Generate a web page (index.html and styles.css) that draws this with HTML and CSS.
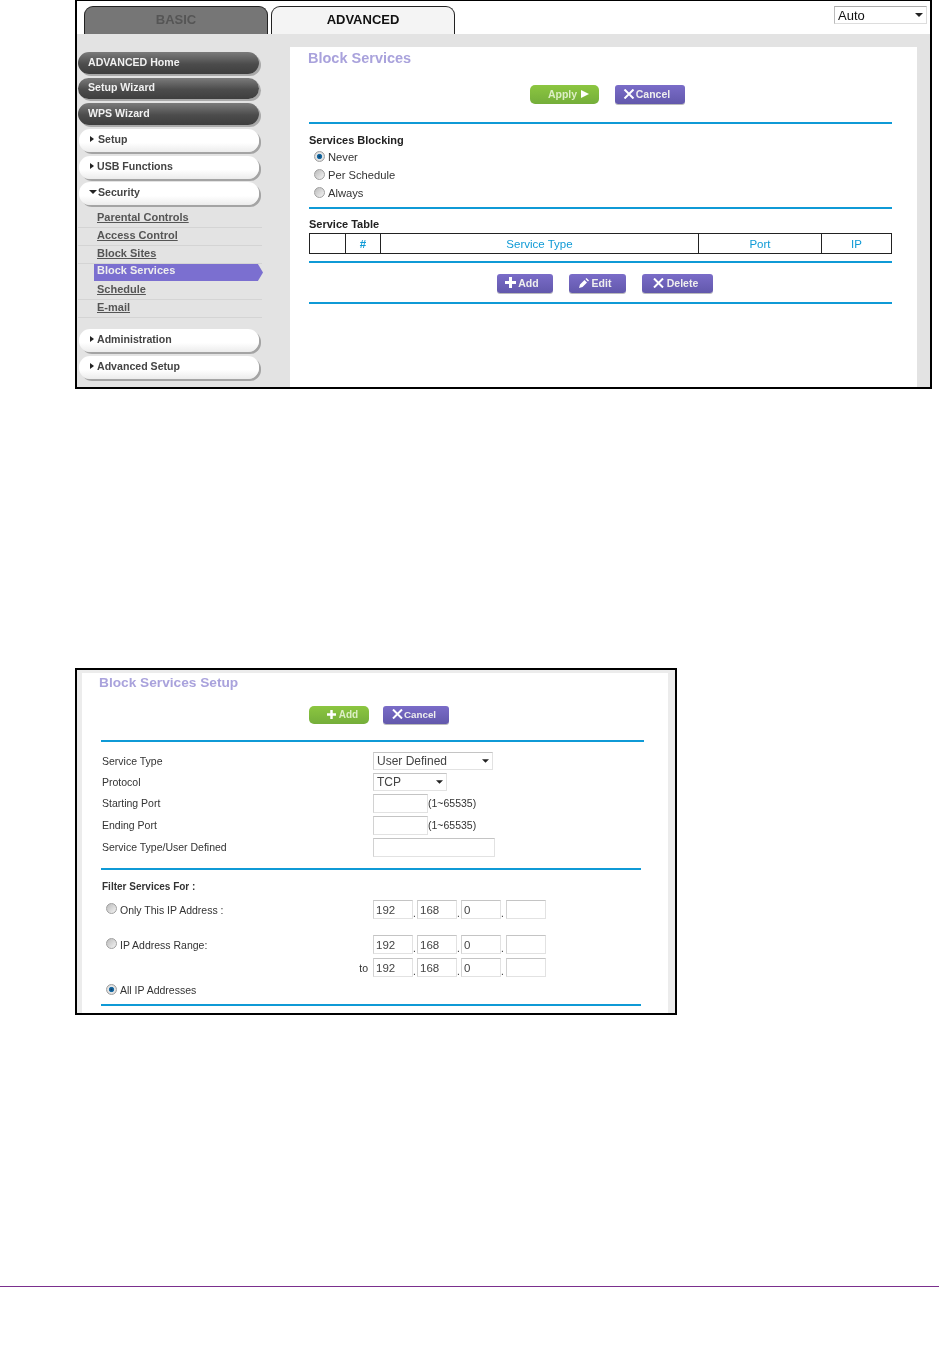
FILE: index.html
```html
<!DOCTYPE html>
<html lang="en">

<head>
    <meta charset="UTF-8">
    <meta name="viewport" content="width=device-width, initial-scale=1.0">
    <title>Block Services</title>
    <link rel="stylesheet" href="styles.css">
</head>

<body>

    <div class="shot shot-main">
        <div class="topbar">
            <div class="tab tab-basic">BASIC</div>
            <div class="tab tab-advanced">ADVANCED</div>
            <div class="lang">
                <span>Auto</span>
                <svg class="arrow" width="8" height="4" viewBox="0 0 8 4"><path d="M0 0H8L4 4Z" /></svg>
            </div>
        </div>

        <div class="main-body">
            <div class="sidebar">
                <a class="nav nav-dark nav-a">ADVANCED Home</a>
                <a class="nav nav-dark nav-b">Setup Wizard</a>
                <a class="nav nav-dark nav-c">WPS Wizard</a>
                <a class="nav nav-light nav-d"><i class="tri-right tri-wide"></i>Setup</a>
                <a class="nav nav-light nav-d"><i class="tri-right"></i>USB Functions</a>
                <a class="nav nav-light nav-e"><i class="tri-down"></i>Security</a>

                <div class="subnav">
                    <a class="sub">Parental Controls</a>
                    <a class="sub">Access Control</a>
                    <a class="sub">Block Sites</a>
                    <a class="sub sub-active">Block Services</a>
                    <a class="sub">Schedule</a>
                    <a class="sub">E-mail</a>
                </div>

                <a class="nav nav-light nav-f"><i class="tri-right"></i>Administration</a>
                <a class="nav nav-light nav-d"><i class="tri-right"></i>Advanced Setup</a>
            </div>

            <div class="panel">
                <h2 class="title">Block Services</h2>

                <div class="btn-row btn-row-top">
                    <button class="btn btn-green btn-apply">Apply
                        <svg width="8" height="8" viewBox="0 0 8 8"><path d="M0 0L8 4L0 8Z" /></svg>
                    </button>
                    <button class="btn btn-purple btn-cancel">
                        <svg class="x-icon" width="12" height="10" viewBox="0 0 12 10"><path d="M1.5 0.5L10.5 9.5M10.5 0.5L1.5 9.5" /></svg>Cancel
                    </button>
                </div>

                <div class="rule"></div>

                <h3 class="sec-title sec-blocking">Services Blocking</h3>
                <div class="radio-row radio-first"><span class="radio radio-on"></span>Never</div>
                <div class="radio-row"><span class="radio"></span>Per Schedule</div>
                <div class="radio-row"><span class="radio"></span>Always</div>

                <div class="rule rule-b"></div>

                <h3 class="sec-title sec-table">Service Table</h3>
                <table class="svc-table">
                    <tr>
                        <th class="col-1"></th>
                        <th class="col-2">#</th>
                        <th class="col-3">Service Type</th>
                        <th class="col-4">Port</th>
                        <th>IP</th>
                    </tr>
                </table>

                <div class="rule rule-c"></div>

                <div class="btn-row btn-row-bottom">
                    <button class="btn btn-purple btn-add">
                        <svg width="11" height="11" viewBox="0 0 11 11"><path d="M4 0H7V4H11V7H7V11H4V7H0V4H4Z" /></svg>Add
                    </button>
                    <button class="btn btn-purple btn-edit">
                        <svg width="10" height="10" viewBox="0 0 10 10"><path d="M0 10L1 6.5L5.5 2L8 4.5L3.5 9ZM6.5 1L7.5 0L10 2.5L9 3.5Z" /></svg>Edit
                    </button>
                    <button class="btn btn-purple btn-delete">
                        <svg class="x-icon" width="11" height="10" viewBox="0 0 11 10"><path d="M1 0.5L10 9.5M10 0.5L1 9.5" /></svg>Delete
                    </button>
                </div>

                <div class="rule rule-d"></div>
            </div>
        </div>
    </div>

    <div class="shot shot-setup">
        <div class="setup-panel">
            <h2 class="title setup-title">Block Services Setup</h2>

            <div class="btn-row setup-btns">
                <button class="btn btn-green btn-setup-add">
                    <svg width="9" height="9" viewBox="0 0 11 11"><path d="M4 0H7V4H11V7H7V11H4V7H0V4H4Z" /></svg>Add
                </button>
                <button class="btn btn-purple btn-setup-cancel">
                    <svg class="x-icon" width="11" height="10" viewBox="0 0 11 10"><path d="M1 0.5L10 9.5M10 0.5L1 9.5" /></svg>Cancel
                </button>
            </div>

            <div class="rule setup-rule-a"></div>

            <div class="form-row row-a">
                <label>Service Type</label>
                <div class="box sel-type"><span>User Defined</span><svg class="arrow" width="7" height="4" viewBox="0 0 8 4"><path d="M0 0H8L4 4Z" /></svg></div>
            </div>
            <div class="form-row row-b">
                <label>Protocol</label>
                <div class="box sel-proto"><span>TCP</span><svg class="arrow" width="7" height="4" viewBox="0 0 8 4"><path d="M0 0H8L4 4Z" /></svg></div>
            </div>
            <div class="form-row row-c">
                <label>Starting Port</label>
                <div class="box port"></div><span class="hint">(1~65535)</span>
            </div>
            <div class="form-row row-c">
                <label>Ending Port</label>
                <div class="box port"></div><span class="hint">(1~65535)</span>
            </div>
            <div class="form-row row-c">
                <label>Service Type/User Defined</label>
                <div class="box user-def"></div>
            </div>

            <div class="rule setup-rule-b"></div>

            <h3 class="filter-title">Filter Services For :</h3>

            <div class="form-row ip-row ip-first">
                <label class="radio-label"><span class="radio"></span>Only This IP Address :</label>
                <div class="ip-group">
                    <div class="box ip">192</div><i>.</i><div class="box ip">168</div><i>.</i><div class="box ip">0</div><i>.</i><div class="box ip"></div>
                </div>
            </div>
            <div class="form-row ip-row ip-second">
                <label class="radio-label"><span class="radio"></span>IP Address Range:</label>
                <div class="ip-group">
                    <div class="box ip">192</div><i>.</i><div class="box ip">168</div><i>.</i><div class="box ip">0</div><i>.</i><div class="box ip"></div>
                </div>
            </div>
            <div class="form-row ip-row ip-third">
                <label class="to-label">to</label>
                <div class="ip-group">
                    <div class="box ip">192</div><i>.</i><div class="box ip">168</div><i>.</i><div class="box ip">0</div><i>.</i><div class="box ip"></div>
                </div>
            </div>
            <div class="form-row all-row">
                <label class="radio-label"><span class="radio radio-on"></span>All IP Addresses</label>
            </div>

            <div class="rule setup-rule-c"></div>
        </div>
    </div>

    <div class="footer-line"></div>

</body>

</html>
```

FILE: styles.css
```css
* {
    margin: 0;
    padding: 0;
    box-sizing: border-box;
}

body {
    font-family: 'Liberation Sans', Arial, sans-serif;
    background: #fff;
    color: #333;
    overflow: hidden;
}

.shot {
    border: 2px solid #000;
    margin-left: 75px;
}

.shot-main {
    width: 857px;
    height: 389px;
    border-top-width: 1px;
    background: #e3e3e3;
    filter: blur(0.3px);
}

/* top tabs */
.topbar {
    height: 33px;
    background: #fff;
    display: flex;
    align-items: flex-end;
    position: relative;
}

.tab {
    height: 28px;
    border: 1px solid #222;
    border-bottom: none;
    border-radius: 9px 9px 0 0;
    display: flex;
    justify-content: center;
    align-items: center;
    padding-bottom: 3px;
    font-size: 13px;
    font-weight: bold;
}

.tab-basic {
    width: 184px;
    margin-left: 7px;
    background: #767676;
    color: #555;
}

.tab-advanced {
    width: 184px;
    margin-left: 3px;
    background: #f4f4f4;
    color: #111;
}

.lang {
    position: absolute;
    top: 5px;
    left: 757px;
    width: 93px;
    height: 18px;
    border: 1px solid #ddd;
    border-top-color: #aaa;
    border-left-color: #bbb;
    background: #fff;
    display: flex;
    justify-content: space-between;
    align-items: center;
    padding: 0 3px;
    font-size: 13px;
    color: #111;
}

.arrow {
    fill: #222;
}

.main-body {
    display: flex;
    height: 355px;
}

/* sidebar */
.sidebar {
    width: 213px;
    flex-shrink: 0;
    padding-left: 1px;
}

.nav {
    display: flex;
    align-items: center;
    width: 181px;
    border-radius: 11px;
    padding-bottom: 3px;
    font-size: 10.6px;
    font-weight: bold;
}

.nav-dark {
    background: linear-gradient(to bottom, #7b7b7b, #4c4c4c 55%, #3e3e3e);
    color: #f1f1f1;
    padding-left: 10px;
    box-shadow: 2px 2px 0 #a9a9a9;
    height: 22px;
}

.nav-a {
    margin-top: 18px;
}

.nav-b {
    margin-top: 4px;
    height: 21px;
}

.nav-c {
    margin-top: 4px;
}

.nav-light {
    background: linear-gradient(to bottom, #fff 60%, #ececec);
    color: #444;
    margin-left: 1px;
    width: 180px;
    padding-left: 11px;
    box-shadow: 2px 2px 0 #a4a4a4;
    height: 23px;
}

.nav-d {
    margin-top: 4px;
}

.nav-e {
    margin-top: 3px;
}

.nav-f {
    margin-top: 11px;
}

.tri-right {
    width: 0;
    height: 0;
    border-left: 4px solid #222;
    border-top: 3px solid transparent;
    border-bottom: 3px solid transparent;
    margin-right: 3px;
}

.tri-wide {
    margin-right: 4px;
}

.tri-down {
    width: 0;
    height: 0;
    border-top: 4px solid #222;
    border-left: 4px solid transparent;
    border-right: 4px solid transparent;
    margin-right: 1px;
    margin-left: -1px;
}

.subnav {
    margin-top: 5px;
    width: 184px;
}

.sub {
    display: block;
    height: 18px;
    line-height: 15px;
    padding-left: 19px;
    font-size: 11px;
    font-weight: bold;
    color: #555;
    text-decoration: underline;
    border-bottom: 1px solid #d4d4d4;
}

.sub-active {
    width: 169px;
    margin-left: 16px;
    padding-left: 3px;
    height: 17px;
    line-height: 13px;
    margin-bottom: 1px;
    background: #7b6fd0;
    color: #eee;
    text-decoration: none;
    border-bottom: none;
    clip-path: polygon(0 0, 97% 0, 100% 50%, 97% 100%, 0 100%);
}

/* content panel */
.panel {
    width: 627px;
    height: 340px;
    margin-top: 13px;
    background: #fff;
    padding-left: 19px;
}

.title {
    font-size: 14.5px;
    font-weight: bold;
    color: #a9a2dc;
    line-height: 16px;
    margin-top: 3px;
    margin-left: -1px;
}

.btn-row {
    display: flex;
}

.btn-row-top {
    margin-top: 19px;
    margin-left: 221px;
    gap: 16px;
}

.btn {
    height: 19px;
    border: none;
    border-radius: 3px;
    font-family: inherit;
    font-size: 10.5px;
    font-weight: bold;
    color: #eee;
    display: flex;
    justify-content: center;
    align-items: center;
    gap: 3px;
    padding-bottom: 2px;
    fill: #fff;
}

.x-icon {
    fill: none;
    stroke: #fff;
    stroke-width: 2;
}

.btn-green {
    background: linear-gradient(to bottom, #8cc640, #74ae3a);
    border-radius: 5px;
    color: #dcefc4;
}

.btn-purple {
    background: linear-gradient(to bottom, #7a6cc8, #6258ac);
    box-shadow: 0 1px 0 #bbb;
}

.btn-apply {
    width: 69px;
    padding-left: 8px;
    gap: 4px;
}

.btn-cancel {
    width: 70px;
    gap: 1px;
    padding-right: 7px;
}

.rule {
    height: 2px;
    background: #0f9ad6;
    width: 583px;
    margin-top: 18px;
}

.sec-title {
    font-size: 11px;
    font-weight: bold;
    color: #222;
}

.sec-blocking {
    margin-top: 9px;
    line-height: 14px;
}

.radio-row {
    display: flex;
    align-items: center;
    height: 18px;
    font-size: 11.2px;
    color: #333;
    padding-left: 5px;
    gap: 3px;
}

.radio-first {
    margin-top: 1px;
}

.radio {
    display: inline-block;
    width: 11px;
    height: 11px;
    margin-top: -2px;
    border-radius: 50%;
    border: 1px solid #a0a0a0;
    background: linear-gradient(135deg, #bbb, #f4f4f4);
    flex-shrink: 0;
}

.radio-on {
    background: radial-gradient(circle, #0e3f6a 0, #1a6fa8 35%, #e8e8e8 48%, #c9c9c9);
}

.rule-b {
    margin-top: 5px;
}

.sec-table {
    margin-top: 8px;
    line-height: 14px;
}

.svc-table {
    margin-top: 2px;
    width: 583px;
    height: 21px;
    border-collapse: collapse;
    table-layout: fixed;
}

.svc-table th {
    border: 1px solid #222;
    font-size: 11.5px;
    font-weight: normal;
    color: #0f9ad6;
}

.col-1 {
    width: 36px;
}

.col-2 {
    width: 35px;
    font-weight: bold !important;
}

.col-3 {
    width: 318px;
}

.col-4 {
    width: 123px;
}

.rule-c {
    margin-top: 7px;
}

.btn-row-bottom {
    margin-top: 11px;
    margin-left: 188px;
    gap: 16px;
}

.btn-add {
    width: 56px;
    gap: 2px;
    padding-right: 6px;
}

.btn-edit {
    width: 57px;
    padding-right: 5px;
}

.btn-delete {
    width: 71px;
    padding-right: 4px;
}

.rule-d {
    margin-top: 9px;
}

/* second screenshot */
.shot-setup {
    width: 602px;
    height: 347px;
    margin-top: 279px;
    background: #ececec;
    padding: 3px 7px 0 5px;
    filter: blur(0.5px);
}

.setup-panel {
    height: 340px;
    background: #fff;
    padding-left: 16px;
}

.setup-title {
    margin-top: 0;
    margin-left: 1px;
    padding-top: 2px;
    height: 18px;
    font-size: 13.7px;
}

.setup-btns {
    margin-top: 15px;
    margin-left: 211px;
    gap: 14px;
}

.btn-setup-add {
    width: 60px;
    height: 18px;
    font-size: 10px;
    padding-left: 7px;
}

.btn-setup-cancel {
    width: 66px;
    height: 18px;
    font-size: 9.8px;
    gap: 1px;
    padding-right: 4px;
}

.setup-rule-a {
    margin-top: 16px;
    margin-left: 3px;
    width: 543px;
}

.form-row {
    display: flex;
    align-items: center;
    font-size: 10.5px;
    color: #333;
}

.form-row label {
    width: 271px;
    margin-left: 4px;
    flex-shrink: 0;
}

.box {
    height: 19px;
    border: 1px solid #e2e2e2;
    border-top-color: #c4c4c4;
    border-left-color: #d2d2d2;
    background: #fff;
    font-size: 12px;
    color: #444;
    display: flex;
    align-items: center;
    padding-left: 3px;
}

.box .arrow {
    margin-left: auto;
    margin-right: 3px;
}

.row-a {
    height: 20px;
    margin-top: 9px;
}

.row-b {
    height: 21px;
}

.row-c {
    height: 22px;
}

.sel-type {
    width: 120px;
    height: 18px;
}

.sel-proto {
    width: 74px;
    height: 18px;
}

.port {
    width: 55px;
}

.hint {
    font-size: 10.5px;
}

.user-def {
    width: 122px;
}

.setup-rule-b {
    margin-top: 10px;
    margin-left: 3px;
    width: 540px;
}

.filter-title {
    font-size: 10px;
    font-weight: bold;
    color: #333;
    margin: 10px 0 0 4px;
    line-height: 14px;
}

.radio-label {
    display: flex;
    align-items: center;
    gap: 3px;
    padding-left: 4px;
}

.to-label {
    text-align: right;
    padding-right: 5px;
}

.ip-group {
    display: flex;
    align-items: flex-end;
}

.ip-group i {
    width: 4px;
    font-style: normal;
    font-size: 10px;
    line-height: 10px;
}

.ip {
    width: 40px;
    font-size: 11.5px;
    padding-left: 2px;
}

.ip:last-child {
    margin-left: 1px;
}

.ip-first {
    margin-top: 6px;
    height: 19px;
}

.ip-second {
    margin-top: 16px;
    height: 19px;
}

.ip-third {
    margin-top: 4px;
    height: 19px;
}

.all-row {
    margin-top: 5px;
    height: 16px;
}

.setup-rule-c {
    margin-top: 6px;
    margin-left: 3px;
    width: 540px;
}

.footer-line {
    margin-top: 271px;
    height: 1px;
    background: #7a2f8e;
}
```
